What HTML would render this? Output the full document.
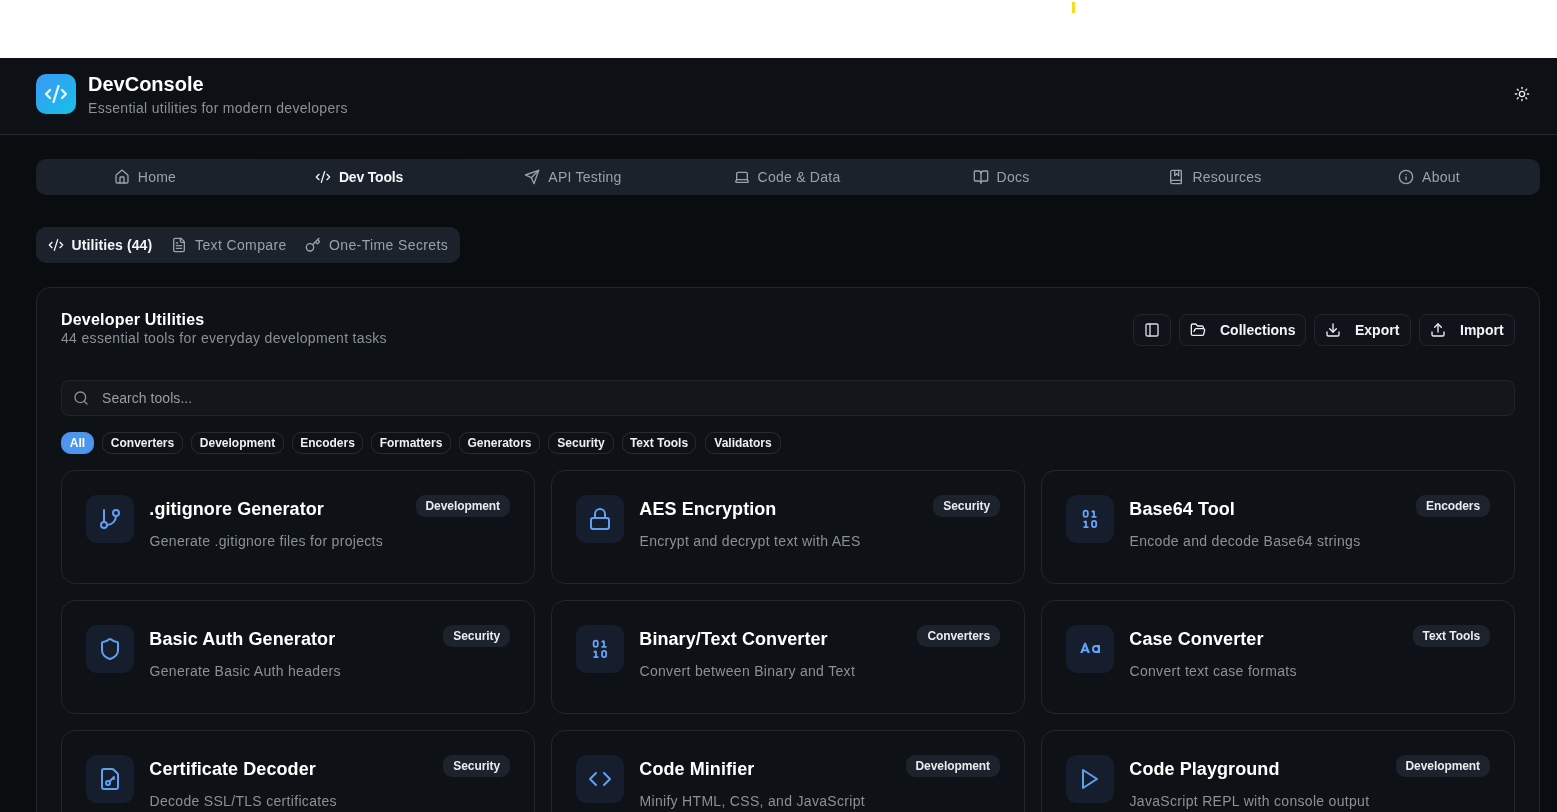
<!DOCTYPE html><html><head><meta charset="utf-8"><style>*{box-sizing:border-box;margin:0;padding:0}
html,body{width:1557px;height:812px;overflow:hidden}
body{background:#0a0d10;will-change:transform;font-family:"Liberation Sans",sans-serif;color:#f2f4f7;position:relative}
svg{display:block;flex:none}
.top{position:absolute;left:0;top:0;width:1557px;height:58px;background:#fff}
.ymark{position:absolute;left:1072px;top:2px;width:3px;height:11px;background:#f2dd2a;box-shadow:0 0 2px rgba(250,235,90,.7)}
.header{position:absolute;left:0;top:58px;width:1557px;height:77px;background:#0d1014;border-bottom:1px solid #252930}
.logo{position:absolute;left:36px;top:74px;width:40px;height:40px;border-radius:10px;background:linear-gradient(135deg,#3b97f5,#14c2e6)}
.brand{position:absolute;left:88px;top:72px;font-size:20px;font-weight:700;color:#fff;line-height:24px}
.tag{position:absolute;left:88px;top:99px;font-size:14px;color:#8b9098;line-height:18px;letter-spacing:0.3px}
.nav{position:absolute;left:36px;top:159px;width:1504px;height:36px;border-radius:10px;background:#1b222b}
.activebg{position:absolute;left:217px;top:1px;width:214px;height:34px;border-radius:8px;background:#1b222b;box-shadow:0 0 1px rgba(0,0,0,.12)}
.navtab{position:absolute;top:0;height:36px;display:flex;align-items:center;justify-content:center;font-size:14px;color:#9ca1a8;gap:8px;letter-spacing:0.25px}
.navtab span{line-height:16px}
.navtab.active{color:#f4f6f8;font-weight:700;letter-spacing:-0.2px}
.sub{position:absolute;left:36px;top:227px;width:424px;height:36px;border-radius:10px;background:#1b222b}
.st{position:absolute;top:237px;font-size:14px;line-height:16px;color:#9ca1a8;letter-spacing:0.38px;white-space:nowrap}
.st.act{color:#f4f6f8;font-weight:700;letter-spacing:0.1px}
.main{position:absolute;left:36px;top:287px;width:1504px;height:600px;border:1px solid #22272e;border-radius:14px;background:#0e1116}
.h2{position:absolute;left:61px;top:310px;font-size:16px;font-weight:700;color:#fff;line-height:20px;letter-spacing:0.2px}
.h2sub{position:absolute;left:61px;top:329px;font-size:14px;color:#8b9098;line-height:18px;letter-spacing:0.33px}
.btn{position:absolute;top:314px;height:32px;border:1px solid #22272e;border-radius:8px;background:#10141a;display:flex;align-items:center;font-size:14px;line-height:16px;font-weight:700;color:#f2f4f7}
.search{position:absolute;left:61px;top:380px;width:1454px;height:36px;border:1px solid #20252b;border-radius:8px;background:#13171b}
.ph{position:absolute;left:102px;top:389px;font-size:14px;color:#989da5;line-height:18px;letter-spacing:0.05px}
.chip{position:absolute;top:432px;height:22px;border:1px solid #272c33;border-radius:9.5px;font-size:12px;font-weight:700;color:#eef0f3;line-height:20px;text-align:center}
.chip.on{background:#4e95ef;border-color:#4e95ef;color:#fff}
.card{position:absolute;width:474px;height:114px;border:1px solid #22272e;border-radius:14px;background:#0e1116}
.ib{position:absolute;left:24px;top:24px;width:48px;height:48px;border-radius:11px;background:#161e2e;display:flex;align-items:center;justify-content:center}
.ct{position:absolute;left:87.3px;top:27px;font-size:18px;font-weight:700;color:#fff;line-height:22px;white-space:nowrap;letter-spacing:0.08px}
.cd{position:absolute;left:87.5px;top:61px;font-size:14px;color:#8b9098;line-height:18px;white-space:nowrap;letter-spacing:0.31px}
.badge{position:absolute;right:24px;top:24px;height:22px;border-radius:9px;letter-spacing:-0.08px;background:#1d232c;font-size:12px;font-weight:700;color:#e9ecef;line-height:22px;padding:0 10px;white-space:nowrap}
.bin{font-family:"Liberation Mono",monospace;font-weight:700;font-size:11.5px;line-height:10px;color:#66a3f6;text-align:center;letter-spacing:1.1px;padding-left:1.1px}
.aa{font-family:"Liberation Sans",sans-serif;font-weight:700;font-size:13px;color:#62a0f4;letter-spacing:1px}
</style></head><body>
<div class="top"><div class="ymark"></div></div>
<div class="header"></div>
<div class="logo"><svg style="position:absolute;left:8px;top:8px;" width="24" height="24" viewBox="0 0 24 24" fill="none" stroke="#e8f8ff" stroke-width="2.3" stroke-linecap="round" stroke-linejoin="round"><path d="m18 16 4-4-4-4"/><path d="m6 8-4 4 4 4"/><path d="m14.5 4-5 16"/></svg></div>
<div class="brand">DevConsole</div>
<div class="tag">Essential utilities for modern developers</div>
<svg style="position:absolute;left:1514px;top:86px;" width="16" height="16" viewBox="0 0 24 24" fill="none" stroke="#e8eaed" stroke-width="2" stroke-linecap="round" stroke-linejoin="round"><circle cx="12" cy="12" r="4"/><path d="M12 2v2"/><path d="M12 20v2"/><path d="m4.93 4.93 1.41 1.41"/><path d="m17.66 17.66 1.41 1.41"/><path d="M2 12h2"/><path d="M20 12h2"/><path d="m6.34 17.66-1.41 1.41"/><path d="m19.07 4.93-1.41 1.41"/></svg>
<div class="nav">
<div class="activebg"></div>
<div class="navtab" style="left:2px;width:214px"><svg style="" width="16" height="16" viewBox="0 0 24 24" fill="none" stroke="#9ca1a8" stroke-width="2" stroke-linecap="round" stroke-linejoin="round"><path d="M15 21v-8a1 1 0 0 0-1-1h-4a1 1 0 0 0-1 1v8"/><path d="M3 10a2 2 0 0 1 .709-1.528l7-5.999a2 2 0 0 1 2.582 0l7 5.999A2 2 0 0 1 21 10v9a2 2 0 0 1-2 2H5a2 2 0 0 1-2-2z"/></svg><span>Home</span></div>
<div class="navtab active" style="left:216px;width:214px"><svg style="" width="16" height="16" viewBox="0 0 24 24" fill="none" stroke="#f4f6f8" stroke-width="2" stroke-linecap="round" stroke-linejoin="round"><path d="m18 16 4-4-4-4"/><path d="m6 8-4 4 4 4"/><path d="m14.5 4-5 16"/></svg><span>Dev Tools</span></div>
<div class="navtab" style="left:430px;width:214px"><svg style="" width="16" height="16" viewBox="0 0 24 24" fill="none" stroke="#9ca1a8" stroke-width="2" stroke-linecap="round" stroke-linejoin="round"><path d="m22 2-7 20-4-9-9-4Z"/><path d="M22 2 11 13"/></svg><span>API Testing</span></div>
<div class="navtab" style="left:644px;width:214px"><svg style="" width="16" height="16" viewBox="0 0 24 24" fill="none" stroke="#9ca1a8" stroke-width="2" stroke-linecap="round" stroke-linejoin="round"><path d="M20 16V7a2 2 0 0 0-2-2H6a2 2 0 0 0-2 2v9m16 0H4m16 0 1.28 2.55a1 1 0 0 1-.9 1.45H3.62a1 1 0 0 1-.9-1.45L4 16"/></svg><span>Code &amp; Data</span></div>
<div class="navtab" style="left:858px;width:214px"><svg style="" width="16" height="16" viewBox="0 0 24 24" fill="none" stroke="#9ca1a8" stroke-width="2" stroke-linecap="round" stroke-linejoin="round"><path d="M12 7v14"/><path d="M3 18a1 1 0 0 1-1-1V4a1 1 0 0 1 1-1h5a4 4 0 0 1 4 4 4 4 0 0 1 4-4h5a1 1 0 0 1 1 1v13a1 1 0 0 1-1 1h-6a3 3 0 0 0-3 3 3 3 0 0 0-3-3z"/></svg><span>Docs</span></div>
<div class="navtab" style="left:1072px;width:214px"><svg style="" width="16" height="16" viewBox="0 0 24 24" fill="none" stroke="#9ca1a8" stroke-width="2" stroke-linecap="round" stroke-linejoin="round"><path d="M10 2v8l3-3 3 3V2"/><path d="M4 19.5v-15A2.5 2.5 0 0 1 6.5 2H19a1 1 0 0 1 1 1v18a1 1 0 0 1-1 1H6.5a1 1 0 0 1 0-5H20"/></svg><span>Resources</span></div>
<div class="navtab" style="left:1286px;width:214px"><svg style="" width="16" height="16" viewBox="0 0 24 24" fill="none" stroke="#9ca1a8" stroke-width="2" stroke-linecap="round" stroke-linejoin="round"><circle cx="12" cy="12" r="10"/><path d="M12 16v-4"/><path d="M12 8h.01"/></svg><span>About</span></div>
</div>
<div class="sub"></div>
<svg style="position:absolute;left:48px;top:237px;" width="16" height="16" viewBox="0 0 24 24" fill="none" stroke="#f4f6f8" stroke-width="2" stroke-linecap="round" stroke-linejoin="round"><path d="m18 16 4-4-4-4"/><path d="m6 8-4 4 4 4"/><path d="m14.5 4-5 16"/></svg>
<div class="st act" style="left:71.5px">Utilities (44)</div>
<svg style="position:absolute;left:171px;top:237px;" width="16" height="16" viewBox="0 0 24 24" fill="none" stroke="#9ca1a8" stroke-width="2" stroke-linecap="round" stroke-linejoin="round"><path d="M15 2H6a2 2 0 0 0-2 2v16a2 2 0 0 0 2 2h12a2 2 0 0 0 2-2V7Z"/><path d="M14 2v4a2 2 0 0 0 2 2h4"/><path d="M10 9H8"/><path d="M16 13H8"/><path d="M16 17H8"/></svg>
<div class="st" style="left:195px">Text Compare</div>
<svg style="position:absolute;left:305px;top:237px;" width="16" height="16" viewBox="0 0 24 24" fill="none" stroke="#9ca1a8" stroke-width="2" stroke-linecap="round" stroke-linejoin="round"><path d="m15.5 7.5 2.3 2.3a1 1 0 0 0 1.4 0l2.1-2.1a1 1 0 0 0 0-1.4L19 4"/><path d="m21 2-9.6 9.6"/><circle cx="7.5" cy="15.5" r="5.5"/></svg>
<div class="st" style="left:329px">One-Time Secrets</div>
<div class="main"></div>
<div class="h2">Developer Utilities</div>
<div class="h2sub">44 essential tools for everyday development tasks</div>
<div class="btn" style="left:1133px;width:38px;justify-content:center"><svg style="" width="16" height="16" viewBox="0 0 24 24" fill="none" stroke="#d8dbe0" stroke-width="2" stroke-linecap="round" stroke-linejoin="round"><rect width="18" height="18" x="3" y="3" rx="2"/><path d="M9 3v18"/></svg></div>
<div class="btn" style="left:1179px;width:127px"><svg style="position:absolute;left:10px;top:7px;" width="16" height="16" viewBox="0 0 24 24" fill="none" stroke="#eef0f3" stroke-width="2" stroke-linecap="round" stroke-linejoin="round"><path d="m6 14 1.5-2.9A2 2 0 0 1 9.24 10H20a2 2 0 0 1 1.94 2.5l-1.54 6a2 2 0 0 1-1.95 1.5H4a2 2 0 0 1-2-2V5a2 2 0 0 1 2-2h3.9a2 2 0 0 1 1.69.9l.81 1.2a2 2 0 0 0 1.67.9H18a2 2 0 0 1 2 2v2"/></svg><span style="position:absolute;left:40px;top:7px">Collections</span></div>
<div class="btn" style="left:1314px;width:97px"><svg style="position:absolute;left:10px;top:7px;" width="16" height="16" viewBox="0 0 24 24" fill="none" stroke="#eef0f3" stroke-width="2" stroke-linecap="round" stroke-linejoin="round"><path d="M21 15v4a2 2 0 0 1-2 2H5a2 2 0 0 1-2-2v-4"/><polyline points="7 10 12 15 17 10"/><line x1="12" x2="12" y1="15" y2="3"/></svg><span style="position:absolute;left:40px;top:7px">Export</span></div>
<div class="btn" style="left:1419px;width:96px"><svg style="position:absolute;left:10px;top:7px;" width="16" height="16" viewBox="0 0 24 24" fill="none" stroke="#eef0f3" stroke-width="2" stroke-linecap="round" stroke-linejoin="round"><path d="M21 15v4a2 2 0 0 1-2 2H5a2 2 0 0 1-2-2v-4"/><polyline points="17 8 12 3 7 8"/><line x1="12" x2="12" y1="3" y2="15"/></svg><span style="position:absolute;left:40px;top:7px">Import</span></div>
<div class="search"><svg style="position:absolute;left:11px;top:9px;" width="16" height="16" viewBox="0 0 24 24" fill="none" stroke="#8b9098" stroke-width="2" stroke-linecap="round" stroke-linejoin="round"><circle cx="11" cy="11" r="8"/><path d="m21 21-4.3-4.3"/></svg></div>
<div class="ph">Search tools...</div>
<div class="chip on" style="left:61px;width:33px">All</div>
<div class="chip" style="left:102px;width:81px">Converters</div>
<div class="chip" style="left:191px;width:93px">Development</div>
<div class="chip" style="left:292px;width:71px">Encoders</div>
<div class="chip" style="left:371px;width:80px">Formatters</div>
<div class="chip" style="left:459px;width:81px">Generators</div>
<div class="chip" style="left:548px;width:66px">Security</div>
<div class="chip" style="left:622px;width:74px">Text Tools</div>
<div class="chip" style="left:705px;width:76px">Validators</div>
<div class="card" style="left:61px;top:470px"><div class="ib"><svg style="" width="24" height="24" viewBox="0 0 24 24" fill="none" stroke="#5f9ff4" stroke-width="2" stroke-linecap="round" stroke-linejoin="round"><line x1="6" x2="6" y1="3" y2="15"/><circle cx="18" cy="6" r="3"/><circle cx="6" cy="18" r="3"/><path d="M18 9a9 9 0 0 1-9 9"/></svg></div><div class="ct">.gitignore Generator</div><div class="cd">Generate .gitignore files for projects</div><div class="badge">Development</div></div>
<div class="card" style="left:551px;top:470px"><div class="ib"><svg style="" width="24" height="24" viewBox="0 0 24 24" fill="none" stroke="#5f9ff4" stroke-width="2" stroke-linecap="round" stroke-linejoin="round"><rect width="18" height="11" x="3" y="11" rx="2" ry="2"/><path d="M7 11V7a5 5 0 0 1 10 0v4"/></svg></div><div class="ct">AES Encryption</div><div class="cd">Encrypt and decrypt text with AES</div><div class="badge">Security</div></div>
<div class="card" style="left:1041px;top:470px"><div class="ib"><svg width="48" height="48" viewBox="0 0 48 48" style="position:absolute;left:0;top:0" fill="none" stroke="#66a3f6" stroke-width="1.8" stroke-linejoin="round"><rect x="17.599999999999998" y="15.700000000000001" width="4.2" height="6.2" rx="2.1"/><path d="M28.0 15.700000000000001V21.9M25.700000000000003 17.1L28.0 15.700000000000001M25.5 21.9H30.5"/><path d="M20.0 25.9V32.1M17.700000000000003 27.3L20.0 25.9M17.5 32.1H22.5"/><rect x="26.0" y="25.9" width="4.2" height="6.2" rx="2.1"/></svg></div><div class="ct">Base64 Tool</div><div class="cd">Encode and decode Base64 strings</div><div class="badge">Encoders</div></div>
<div class="card" style="left:61px;top:600px"><div class="ib"><svg style="" width="24" height="24" viewBox="0 0 24 24" fill="none" stroke="#5f9ff4" stroke-width="2" stroke-linecap="round" stroke-linejoin="round"><path d="M20 13c0 5-3.5 7.5-7.66 8.95a1 1 0 0 1-.67-.01C7.5 20.5 4 18 4 13V6a1 1 0 0 1 1-1c2 0 4.5-1.2 6.24-2.72a1.17 1.17 0 0 1 1.52 0C14.51 3.81 17 5 19 5a1 1 0 0 1 1 1z"/></svg></div><div class="ct">Basic Auth Generator</div><div class="cd">Generate Basic Auth headers</div><div class="badge">Security</div></div>
<div class="card" style="left:551px;top:600px"><div class="ib"><svg width="48" height="48" viewBox="0 0 48 48" style="position:absolute;left:0;top:0" fill="none" stroke="#66a3f6" stroke-width="1.8" stroke-linejoin="round"><rect x="17.599999999999998" y="15.700000000000001" width="4.2" height="6.2" rx="2.1"/><path d="M28.0 15.700000000000001V21.9M25.700000000000003 17.1L28.0 15.700000000000001M25.5 21.9H30.5"/><path d="M20.0 25.9V32.1M17.700000000000003 27.3L20.0 25.9M17.5 32.1H22.5"/><rect x="26.0" y="25.9" width="4.2" height="6.2" rx="2.1"/></svg></div><div class="ct">Binary/Text Converter</div><div class="cd">Convert between Binary and Text</div><div class="badge">Converters</div></div>
<div class="card" style="left:1041px;top:600px"><div class="ib"><svg width="48" height="48" viewBox="0 0 48 48" style="position:absolute;left:0;top:0"><path fill="#66a3f6" fill-rule="evenodd" d="M18.3 17.8H19.9L24 28H21.6L20.9 26.2H17.3L16.6 28H14.2ZM19.1 21.3L18 24.3H20.2Z"/><path fill="#66a3f6" fill-rule="evenodd" d="M30 20H34V28H30A4 4 0 0 1 30 20ZM30 22A2 2 0 1 0 30 26A2 2 0 1 0 30 22Z"/></svg></div><div class="ct">Case Converter</div><div class="cd">Convert text case formats</div><div class="badge">Text Tools</div></div>
<div class="card" style="left:61px;top:730px"><div class="ib"><svg style="" width="24" height="24" viewBox="0 0 24 24" fill="none" stroke="#5f9ff4" stroke-width="2" stroke-linecap="round" stroke-linejoin="round"><path d="M6 22a2 2 0 0 1-2-2V4a2 2 0 0 1 2-2h8a2.4 2.4 0 0 1 1.704.706l3.588 3.588A2.4 2.4 0 0 1 20 8v12a2 2 0 0 1-2 2z"/><circle cx="10" cy="16" r="2"/><path d="m16 10-4.5 4.5"/><path d="m15 11 1 1"/></svg></div><div class="ct">Certificate Decoder</div><div class="cd">Decode SSL/TLS certificates</div><div class="badge">Security</div></div>
<div class="card" style="left:551px;top:730px"><div class="ib"><svg style="" width="24" height="24" viewBox="0 0 24 24" fill="none" stroke="#5f9ff4" stroke-width="2" stroke-linecap="round" stroke-linejoin="round"><polyline points="16 18 22 12 16 6"/><polyline points="8 6 2 12 8 18"/></svg></div><div class="ct">Code Minifier</div><div class="cd">Minify HTML, CSS, and JavaScript</div><div class="badge">Development</div></div>
<div class="card" style="left:1041px;top:730px"><div class="ib"><svg style="" width="24" height="24" viewBox="0 0 24 24" fill="none" stroke="#5f9ff4" stroke-width="2" stroke-linecap="round" stroke-linejoin="round"><polygon points="5 3 19 12 5 21 5 3"/></svg></div><div class="ct">Code Playground</div><div class="cd">JavaScript REPL with console output</div><div class="badge">Development</div></div>
</body></html>
